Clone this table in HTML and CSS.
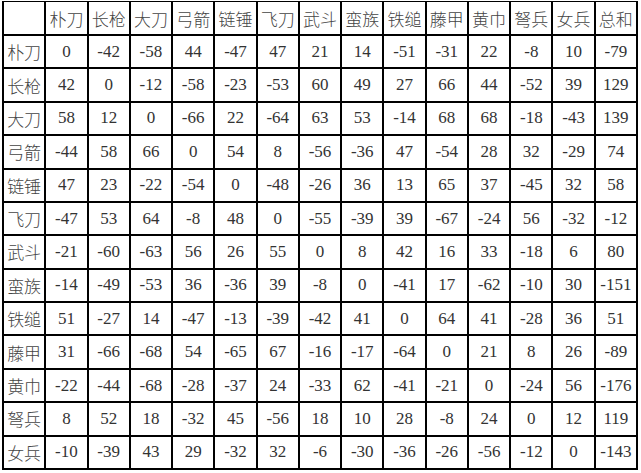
FILE: index.html
```html
<!DOCTYPE html>
<html lang="zh">
<head>
<meta charset="utf-8">
<title>兵种克制表</title>
<link rel="stylesheet" href="styles.css">
</head>
<body>
<div class="grid">
<div class="c"></div><div class="c h">朴刀</div><div class="c h">长枪</div><div class="c h">大刀</div><div class="c h">弓箭</div><div class="c h">链锤</div><div class="c h">飞刀</div><div class="c h">武斗</div><div class="c h">蛮族</div><div class="c h">铁缒</div><div class="c h">藤甲</div><div class="c h">黄巾</div><div class="c h">弩兵</div><div class="c h">女兵</div><div class="c h">总和</div>
<div class="c h">朴刀</div><div class="c">0</div><div class="c">-42</div><div class="c">-58</div><div class="c">44</div><div class="c">-47</div><div class="c">47</div><div class="c">21</div><div class="c">14</div><div class="c">-51</div><div class="c">-31</div><div class="c">22</div><div class="c">-8</div><div class="c">10</div><div class="c">-79</div>
<div class="c h">长枪</div><div class="c">42</div><div class="c">0</div><div class="c">-12</div><div class="c">-58</div><div class="c">-23</div><div class="c">-53</div><div class="c">60</div><div class="c">49</div><div class="c">27</div><div class="c">66</div><div class="c">44</div><div class="c">-52</div><div class="c">39</div><div class="c">129</div>
<div class="c h">大刀</div><div class="c">58</div><div class="c">12</div><div class="c">0</div><div class="c">-66</div><div class="c">22</div><div class="c">-64</div><div class="c">63</div><div class="c">53</div><div class="c">-14</div><div class="c">68</div><div class="c">68</div><div class="c">-18</div><div class="c">-43</div><div class="c">139</div>
<div class="c h">弓箭</div><div class="c">-44</div><div class="c">58</div><div class="c">66</div><div class="c">0</div><div class="c">54</div><div class="c">8</div><div class="c">-56</div><div class="c">-36</div><div class="c">47</div><div class="c">-54</div><div class="c">28</div><div class="c">32</div><div class="c">-29</div><div class="c">74</div>
<div class="c h">链锤</div><div class="c">47</div><div class="c">23</div><div class="c">-22</div><div class="c">-54</div><div class="c">0</div><div class="c">-48</div><div class="c">-26</div><div class="c">36</div><div class="c">13</div><div class="c">65</div><div class="c">37</div><div class="c">-45</div><div class="c">32</div><div class="c">58</div>
<div class="c h">飞刀</div><div class="c">-47</div><div class="c">53</div><div class="c">64</div><div class="c">-8</div><div class="c">48</div><div class="c">0</div><div class="c">-55</div><div class="c">-39</div><div class="c">39</div><div class="c">-67</div><div class="c">-24</div><div class="c">56</div><div class="c">-32</div><div class="c">-12</div>
<div class="c h">武斗</div><div class="c">-21</div><div class="c">-60</div><div class="c">-63</div><div class="c">56</div><div class="c">26</div><div class="c">55</div><div class="c">0</div><div class="c">8</div><div class="c">42</div><div class="c">16</div><div class="c">33</div><div class="c">-18</div><div class="c">6</div><div class="c">80</div>
<div class="c h">蛮族</div><div class="c">-14</div><div class="c">-49</div><div class="c">-53</div><div class="c">36</div><div class="c">-36</div><div class="c">39</div><div class="c">-8</div><div class="c">0</div><div class="c">-41</div><div class="c">17</div><div class="c">-62</div><div class="c">-10</div><div class="c">30</div><div class="c">-151</div>
<div class="c h">铁缒</div><div class="c">51</div><div class="c">-27</div><div class="c">14</div><div class="c">-47</div><div class="c">-13</div><div class="c">-39</div><div class="c">-42</div><div class="c">41</div><div class="c">0</div><div class="c">64</div><div class="c">41</div><div class="c">-28</div><div class="c">36</div><div class="c">51</div>
<div class="c h">藤甲</div><div class="c">31</div><div class="c">-66</div><div class="c">-68</div><div class="c">54</div><div class="c">-65</div><div class="c">67</div><div class="c">-16</div><div class="c">-17</div><div class="c">-64</div><div class="c">0</div><div class="c">21</div><div class="c">8</div><div class="c">26</div><div class="c">-89</div>
<div class="c h">黄巾</div><div class="c">-22</div><div class="c">-44</div><div class="c">-68</div><div class="c">-28</div><div class="c">-37</div><div class="c">24</div><div class="c">-33</div><div class="c">62</div><div class="c">-41</div><div class="c">-21</div><div class="c">0</div><div class="c">-24</div><div class="c">56</div><div class="c">-176</div>
<div class="c h">弩兵</div><div class="c">8</div><div class="c">52</div><div class="c">18</div><div class="c">-32</div><div class="c">45</div><div class="c">-56</div><div class="c">18</div><div class="c">10</div><div class="c">28</div><div class="c">-8</div><div class="c">24</div><div class="c">0</div><div class="c">12</div><div class="c">119</div>
<div class="c h">女兵</div><div class="c">-10</div><div class="c">-39</div><div class="c">43</div><div class="c">29</div><div class="c">-32</div><div class="c">32</div><div class="c">-6</div><div class="c">-30</div><div class="c">-36</div><div class="c">-26</div><div class="c">-56</div><div class="c">-12</div><div class="c">0</div><div class="c">-143</div>
</div>
</body>
</html>
```
FILE: styles.css
```css
html, body {
  margin: 0;
  padding: 0;
  background: #fff;
}
body {
  padding: 1px 0 0 2px;
}
.grid {
  display: grid;
  grid-template-columns: repeat(15, 1fr);
  grid-template-rows: 34px repeat(13, 1fr);
  width: 636px;
  height: 469px;
  border-left: 2px solid #000;
  border-top: 1px solid #000;
  box-sizing: border-box;
  font-family: "Liberation Serif", "Noto Sans CJK SC", serif;
  font-size: 17px;
  color: #333;
}
.c {
  display: flex;
  align-items: center;
  justify-content: center;
  border-right: 2px solid #000;
  border-bottom: 2px solid #000;
  white-space: nowrap;
}
.h {
  font-family: "Noto Sans CJK SC", sans-serif;
  font-weight: 300;
  font-size: 17px;
  color: #444;
}
```
